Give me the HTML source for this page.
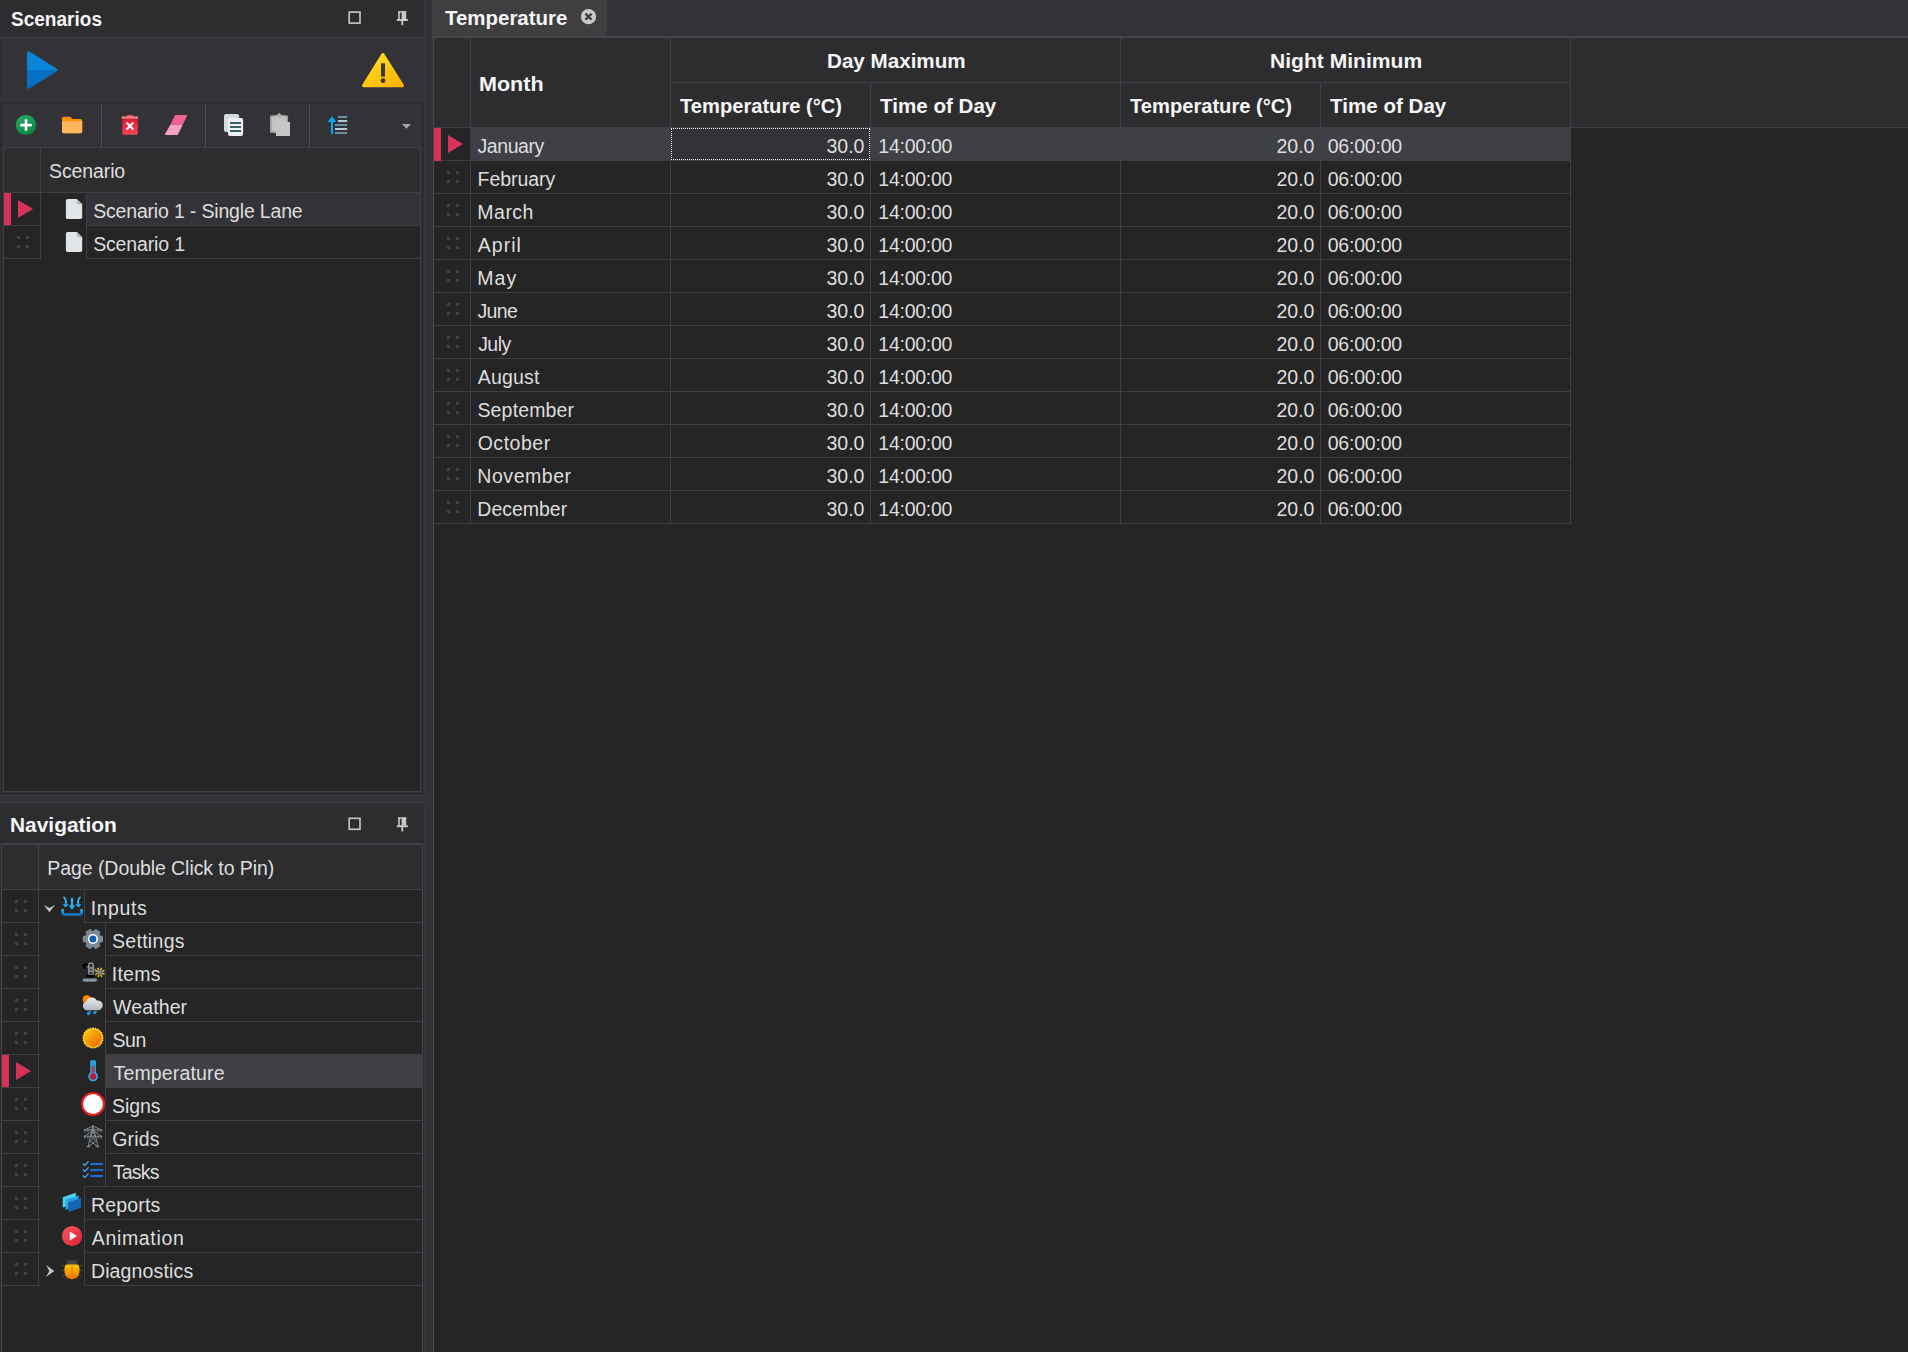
<!DOCTYPE html>
<html lang="en"><head><meta charset="utf-8"><title>Temperature</title>
<style>
html,body{margin:0;padding:0;background:#252526;}
body{width:1908px;height:1352px;overflow:hidden;position:relative;font-family:"Liberation Sans",sans-serif;font-size:19.5px;color:#f4f4f4;}
.t{position:absolute;white-space:nowrap;line-height:normal;color:#dedede;}
.b{font-weight:bold;color:#f6f6f6;transform-origin:0 0;}
.r{position:absolute;}
svg{position:absolute;overflow:visible;}
</style></head>
<body>
<div class="r" style="left:0px;top:0px;width:425px;height:796px;background:#2d2d30;"></div>
<div class="r" style="left:0px;top:37px;width:425px;height:1px;background:#3f3f46;"></div>
<div class="r" style="left:424px;top:0px;width:1px;height:796px;background:#38383c;"></div>
<div class="r" style="left:0px;top:795px;width:425px;height:1px;background:#3f3f46;"></div>
<div class="r" style="left:1px;top:38px;width:423px;height:64px;background:#333337;"></div>
<div class="r" style="left:3px;top:104px;width:418px;height:43px;background:#333337;"></div>
<div class="r" style="left:101px;top:104px;width:1px;height:43px;background:#4e4e53;"></div>
<div class="r" style="left:102px;top:104px;width:1px;height:43px;background:#2f2f33;"></div>
<div class="r" style="left:205px;top:104px;width:1px;height:43px;background:#4e4e53;"></div>
<div class="r" style="left:206px;top:104px;width:1px;height:43px;background:#2f2f33;"></div>
<div class="r" style="left:309px;top:104px;width:1px;height:43px;background:#4e4e53;"></div>
<div class="r" style="left:310px;top:104px;width:1px;height:43px;background:#2f2f33;"></div>
<div class="r" style="left:3px;top:147px;width:418px;height:645px;background:#3f3f46;"></div>
<div class="r" style="left:4px;top:148px;width:416px;height:643px;background:#252526;"></div>
<div class="r" style="left:4px;top:148px;width:416px;height:44px;background:#2d2d30;"></div>
<div class="r" style="left:4px;top:192px;width:416px;height:1px;background:#3f3f46;"></div>
<div class="r" style="left:40px;top:148px;width:1px;height:111px;background:#3f3f46;"></div>
<div class="r" style="left:4px;top:225px;width:38px;height:1px;background:#3f3f46;"></div>
<div class="r" style="left:4px;top:258px;width:38px;height:1px;background:#3f3f46;"></div>
<div class="r" style="left:86px;top:193px;width:1px;height:66px;background:#3f3f46;"></div>
<div class="r" style="left:87px;top:193px;width:333px;height:32px;background:#333337;"></div>
<div class="r" style="left:86px;top:225px;width:334px;height:1px;background:#3f3f46;"></div>
<div class="r" style="left:86px;top:258px;width:334px;height:1px;background:#3f3f46;"></div>
<div class="r" style="left:4px;top:193px;width:7px;height:32px;background:#d6325c;"></div>
<div class="r" style="left:17px;top:236px;width:3px;height:3px;background:#434346;"></div><div class="r" style="left:17px;top:245px;width:3px;height:3px;background:#434346;"></div><div class="r" style="left:26px;top:236px;width:3px;height:3px;background:#434346;"></div><div class="r" style="left:26px;top:245px;width:3px;height:3px;background:#434346;"></div>
<div class="r" style="left:0px;top:796px;width:425px;height:6px;background:#333337;"></div>
<div class="r" style="left:425px;top:0px;width:8px;height:1352px;background:#333337;"></div>
<div class="r" style="left:0px;top:802px;width:425px;height:550px;background:#2d2d30;"></div>
<div class="r" style="left:0px;top:802px;width:425px;height:1px;background:#3f3f46;"></div>
<div class="r" style="left:424px;top:802px;width:1px;height:550px;background:#38383c;"></div>
<div class="r" style="left:0px;top:843px;width:425px;height:1px;background:#3f3f46;"></div>
<div class="r" style="left:1px;top:844px;width:422px;height:508px;background:#434347;"></div>
<div class="r" style="left:2px;top:845px;width:420px;height:507px;background:#252526;"></div>
<div class="r" style="left:2px;top:845px;width:420px;height:44px;background:#2d2d30;"></div>
<div class="r" style="left:2px;top:889px;width:420px;height:1px;background:#3f3f46;"></div>
<div class="r" style="left:38px;top:845px;width:1px;height:441px;background:#3f3f46;"></div>
<div class="r" style="left:2px;top:922px;width:38px;height:1px;background:#3f3f46;"></div>
<div class="r" style="left:84px;top:890px;width:1px;height:33px;background:#3f3f46;"></div>
<div class="r" style="left:84px;top:922px;width:338px;height:1px;background:#3f3f46;"></div>
<div class="r" style="left:15px;top:900px;width:3px;height:3px;background:#434346;"></div><div class="r" style="left:15px;top:909px;width:3px;height:3px;background:#434346;"></div><div class="r" style="left:24px;top:900px;width:3px;height:3px;background:#434346;"></div><div class="r" style="left:24px;top:909px;width:3px;height:3px;background:#434346;"></div>
<div class="r" style="left:2px;top:955px;width:38px;height:1px;background:#3f3f46;"></div>
<div class="r" style="left:105px;top:923px;width:1px;height:33px;background:#3f3f46;"></div>
<div class="r" style="left:105px;top:955px;width:317px;height:1px;background:#3f3f46;"></div>
<div class="r" style="left:15px;top:933px;width:3px;height:3px;background:#434346;"></div><div class="r" style="left:15px;top:942px;width:3px;height:3px;background:#434346;"></div><div class="r" style="left:24px;top:933px;width:3px;height:3px;background:#434346;"></div><div class="r" style="left:24px;top:942px;width:3px;height:3px;background:#434346;"></div>
<div class="r" style="left:2px;top:988px;width:38px;height:1px;background:#3f3f46;"></div>
<div class="r" style="left:105px;top:956px;width:1px;height:33px;background:#3f3f46;"></div>
<div class="r" style="left:105px;top:988px;width:317px;height:1px;background:#3f3f46;"></div>
<div class="r" style="left:15px;top:966px;width:3px;height:3px;background:#434346;"></div><div class="r" style="left:15px;top:975px;width:3px;height:3px;background:#434346;"></div><div class="r" style="left:24px;top:966px;width:3px;height:3px;background:#434346;"></div><div class="r" style="left:24px;top:975px;width:3px;height:3px;background:#434346;"></div>
<div class="r" style="left:2px;top:1021px;width:38px;height:1px;background:#3f3f46;"></div>
<div class="r" style="left:105px;top:989px;width:1px;height:33px;background:#3f3f46;"></div>
<div class="r" style="left:105px;top:1021px;width:317px;height:1px;background:#3f3f46;"></div>
<div class="r" style="left:15px;top:999px;width:3px;height:3px;background:#434346;"></div><div class="r" style="left:15px;top:1008px;width:3px;height:3px;background:#434346;"></div><div class="r" style="left:24px;top:999px;width:3px;height:3px;background:#434346;"></div><div class="r" style="left:24px;top:1008px;width:3px;height:3px;background:#434346;"></div>
<div class="r" style="left:2px;top:1054px;width:38px;height:1px;background:#3f3f46;"></div>
<div class="r" style="left:105px;top:1022px;width:1px;height:33px;background:#3f3f46;"></div>
<div class="r" style="left:105px;top:1054px;width:317px;height:1px;background:#3f3f46;"></div>
<div class="r" style="left:15px;top:1032px;width:3px;height:3px;background:#434346;"></div><div class="r" style="left:15px;top:1041px;width:3px;height:3px;background:#434346;"></div><div class="r" style="left:24px;top:1032px;width:3px;height:3px;background:#434346;"></div><div class="r" style="left:24px;top:1041px;width:3px;height:3px;background:#434346;"></div>
<div class="r" style="left:2px;top:1087px;width:38px;height:1px;background:#3f3f46;"></div>
<div class="r" style="left:105px;top:1055px;width:1px;height:33px;background:#3f3f46;"></div>
<div class="r" style="left:105px;top:1087px;width:317px;height:1px;background:#3f3f46;"></div>
<div class="r" style="left:105px;top:1054px;width:317px;height:34px;background:#3f4046;"></div>
<div class="r" style="left:2px;top:1055px;width:7px;height:32px;background:#d6325c;"></div>
<div class="r" style="left:2px;top:1120px;width:38px;height:1px;background:#3f3f46;"></div>
<div class="r" style="left:105px;top:1088px;width:1px;height:33px;background:#3f3f46;"></div>
<div class="r" style="left:105px;top:1120px;width:317px;height:1px;background:#3f3f46;"></div>
<div class="r" style="left:15px;top:1098px;width:3px;height:3px;background:#434346;"></div><div class="r" style="left:15px;top:1107px;width:3px;height:3px;background:#434346;"></div><div class="r" style="left:24px;top:1098px;width:3px;height:3px;background:#434346;"></div><div class="r" style="left:24px;top:1107px;width:3px;height:3px;background:#434346;"></div>
<div class="r" style="left:2px;top:1153px;width:38px;height:1px;background:#3f3f46;"></div>
<div class="r" style="left:105px;top:1121px;width:1px;height:33px;background:#3f3f46;"></div>
<div class="r" style="left:105px;top:1153px;width:317px;height:1px;background:#3f3f46;"></div>
<div class="r" style="left:15px;top:1131px;width:3px;height:3px;background:#434346;"></div><div class="r" style="left:15px;top:1140px;width:3px;height:3px;background:#434346;"></div><div class="r" style="left:24px;top:1131px;width:3px;height:3px;background:#434346;"></div><div class="r" style="left:24px;top:1140px;width:3px;height:3px;background:#434346;"></div>
<div class="r" style="left:2px;top:1186px;width:38px;height:1px;background:#3f3f46;"></div>
<div class="r" style="left:105px;top:1154px;width:1px;height:33px;background:#3f3f46;"></div>
<div class="r" style="left:105px;top:1186px;width:317px;height:1px;background:#3f3f46;"></div>
<div class="r" style="left:15px;top:1164px;width:3px;height:3px;background:#434346;"></div><div class="r" style="left:15px;top:1173px;width:3px;height:3px;background:#434346;"></div><div class="r" style="left:24px;top:1164px;width:3px;height:3px;background:#434346;"></div><div class="r" style="left:24px;top:1173px;width:3px;height:3px;background:#434346;"></div>
<div class="r" style="left:2px;top:1219px;width:38px;height:1px;background:#3f3f46;"></div>
<div class="r" style="left:84px;top:1186px;width:1px;height:34px;background:#3f3f46;"></div>
<div class="r" style="left:84px;top:1219px;width:338px;height:1px;background:#3f3f46;"></div>
<div class="r" style="left:15px;top:1197px;width:3px;height:3px;background:#434346;"></div><div class="r" style="left:15px;top:1206px;width:3px;height:3px;background:#434346;"></div><div class="r" style="left:24px;top:1197px;width:3px;height:3px;background:#434346;"></div><div class="r" style="left:24px;top:1206px;width:3px;height:3px;background:#434346;"></div>
<div class="r" style="left:2px;top:1252px;width:38px;height:1px;background:#3f3f46;"></div>
<div class="r" style="left:84px;top:1220px;width:1px;height:33px;background:#3f3f46;"></div>
<div class="r" style="left:84px;top:1252px;width:338px;height:1px;background:#3f3f46;"></div>
<div class="r" style="left:15px;top:1230px;width:3px;height:3px;background:#434346;"></div><div class="r" style="left:15px;top:1239px;width:3px;height:3px;background:#434346;"></div><div class="r" style="left:24px;top:1230px;width:3px;height:3px;background:#434346;"></div><div class="r" style="left:24px;top:1239px;width:3px;height:3px;background:#434346;"></div>
<div class="r" style="left:2px;top:1285px;width:38px;height:1px;background:#3f3f46;"></div>
<div class="r" style="left:84px;top:1253px;width:1px;height:33px;background:#3f3f46;"></div>
<div class="r" style="left:84px;top:1285px;width:338px;height:1px;background:#3f3f46;"></div>
<div class="r" style="left:15px;top:1263px;width:3px;height:3px;background:#434346;"></div><div class="r" style="left:15px;top:1272px;width:3px;height:3px;background:#434346;"></div><div class="r" style="left:24px;top:1263px;width:3px;height:3px;background:#434346;"></div><div class="r" style="left:24px;top:1272px;width:3px;height:3px;background:#434346;"></div>
<div class="r" style="left:84px;top:1186px;width:22px;height:1px;background:#3f3f46;"></div>
<div class="r" style="left:433px;top:0px;width:1475px;height:36px;background:#333337;"></div>
<div class="r" style="left:432px;top:0px;width:175px;height:36px;background:#3f3f42;"></div>
<div class="r" style="left:432px;top:36px;width:1476px;height:2px;background:#45454a;"></div>
<div class="r" style="left:433px;top:38px;width:1px;height:1314px;background:#46464b;"></div>
<div class="r" style="left:434px;top:38px;width:1474px;height:89px;background:#2d2d30;"></div>
<div class="r" style="left:434px;top:127px;width:1474px;height:1px;background:#3f3f46;"></div>
<div class="r" style="left:671px;top:82px;width:900px;height:1px;background:#3f3f46;"></div>
<div class="r" style="left:470px;top:38px;width:1px;height:486px;background:#3f3f46;"></div>
<div class="r" style="left:670px;top:38px;width:1px;height:486px;background:#3f3f46;"></div>
<div class="r" style="left:870px;top:83px;width:1px;height:441px;background:#3f3f46;"></div>
<div class="r" style="left:1120px;top:38px;width:1px;height:486px;background:#3f3f46;"></div>
<div class="r" style="left:1320px;top:83px;width:1px;height:441px;background:#3f3f46;"></div>
<div class="r" style="left:1570px;top:38px;width:1px;height:486px;background:#3f3f46;"></div>
<div class="r" style="left:434px;top:160px;width:1137px;height:1px;background:#3f3f46;"></div>
<div class="r" style="left:434px;top:193px;width:1137px;height:1px;background:#3f3f46;"></div>
<div class="r" style="left:447px;top:171px;width:3px;height:3px;background:#434346;"></div><div class="r" style="left:447px;top:180px;width:3px;height:3px;background:#434346;"></div><div class="r" style="left:456px;top:171px;width:3px;height:3px;background:#434346;"></div><div class="r" style="left:456px;top:180px;width:3px;height:3px;background:#434346;"></div>
<div class="r" style="left:434px;top:226px;width:1137px;height:1px;background:#3f3f46;"></div>
<div class="r" style="left:447px;top:204px;width:3px;height:3px;background:#434346;"></div><div class="r" style="left:447px;top:213px;width:3px;height:3px;background:#434346;"></div><div class="r" style="left:456px;top:204px;width:3px;height:3px;background:#434346;"></div><div class="r" style="left:456px;top:213px;width:3px;height:3px;background:#434346;"></div>
<div class="r" style="left:434px;top:259px;width:1137px;height:1px;background:#3f3f46;"></div>
<div class="r" style="left:447px;top:237px;width:3px;height:3px;background:#434346;"></div><div class="r" style="left:447px;top:246px;width:3px;height:3px;background:#434346;"></div><div class="r" style="left:456px;top:237px;width:3px;height:3px;background:#434346;"></div><div class="r" style="left:456px;top:246px;width:3px;height:3px;background:#434346;"></div>
<div class="r" style="left:434px;top:292px;width:1137px;height:1px;background:#3f3f46;"></div>
<div class="r" style="left:447px;top:270px;width:3px;height:3px;background:#434346;"></div><div class="r" style="left:447px;top:279px;width:3px;height:3px;background:#434346;"></div><div class="r" style="left:456px;top:270px;width:3px;height:3px;background:#434346;"></div><div class="r" style="left:456px;top:279px;width:3px;height:3px;background:#434346;"></div>
<div class="r" style="left:434px;top:325px;width:1137px;height:1px;background:#3f3f46;"></div>
<div class="r" style="left:447px;top:303px;width:3px;height:3px;background:#434346;"></div><div class="r" style="left:447px;top:312px;width:3px;height:3px;background:#434346;"></div><div class="r" style="left:456px;top:303px;width:3px;height:3px;background:#434346;"></div><div class="r" style="left:456px;top:312px;width:3px;height:3px;background:#434346;"></div>
<div class="r" style="left:434px;top:358px;width:1137px;height:1px;background:#3f3f46;"></div>
<div class="r" style="left:447px;top:336px;width:3px;height:3px;background:#434346;"></div><div class="r" style="left:447px;top:345px;width:3px;height:3px;background:#434346;"></div><div class="r" style="left:456px;top:336px;width:3px;height:3px;background:#434346;"></div><div class="r" style="left:456px;top:345px;width:3px;height:3px;background:#434346;"></div>
<div class="r" style="left:434px;top:391px;width:1137px;height:1px;background:#3f3f46;"></div>
<div class="r" style="left:447px;top:369px;width:3px;height:3px;background:#434346;"></div><div class="r" style="left:447px;top:378px;width:3px;height:3px;background:#434346;"></div><div class="r" style="left:456px;top:369px;width:3px;height:3px;background:#434346;"></div><div class="r" style="left:456px;top:378px;width:3px;height:3px;background:#434346;"></div>
<div class="r" style="left:434px;top:424px;width:1137px;height:1px;background:#3f3f46;"></div>
<div class="r" style="left:447px;top:402px;width:3px;height:3px;background:#434346;"></div><div class="r" style="left:447px;top:411px;width:3px;height:3px;background:#434346;"></div><div class="r" style="left:456px;top:402px;width:3px;height:3px;background:#434346;"></div><div class="r" style="left:456px;top:411px;width:3px;height:3px;background:#434346;"></div>
<div class="r" style="left:434px;top:457px;width:1137px;height:1px;background:#3f3f46;"></div>
<div class="r" style="left:447px;top:435px;width:3px;height:3px;background:#434346;"></div><div class="r" style="left:447px;top:444px;width:3px;height:3px;background:#434346;"></div><div class="r" style="left:456px;top:435px;width:3px;height:3px;background:#434346;"></div><div class="r" style="left:456px;top:444px;width:3px;height:3px;background:#434346;"></div>
<div class="r" style="left:434px;top:490px;width:1137px;height:1px;background:#3f3f46;"></div>
<div class="r" style="left:447px;top:468px;width:3px;height:3px;background:#434346;"></div><div class="r" style="left:447px;top:477px;width:3px;height:3px;background:#434346;"></div><div class="r" style="left:456px;top:468px;width:3px;height:3px;background:#434346;"></div><div class="r" style="left:456px;top:477px;width:3px;height:3px;background:#434346;"></div>
<div class="r" style="left:434px;top:523px;width:1137px;height:1px;background:#3f3f46;"></div>
<div class="r" style="left:447px;top:501px;width:3px;height:3px;background:#434346;"></div><div class="r" style="left:447px;top:510px;width:3px;height:3px;background:#434346;"></div><div class="r" style="left:456px;top:501px;width:3px;height:3px;background:#434346;"></div><div class="r" style="left:456px;top:510px;width:3px;height:3px;background:#434346;"></div>
<div class="r" style="left:471px;top:127px;width:1100px;height:34px;background:#3f4046;"></div>
<div class="r" style="left:434px;top:128px;width:7px;height:33px;background:#d6325c;"></div>
<div class="r" style="left:671px;top:128px;width:197px;height:30px;background:#333337;border:1px dotted #f0f0f0"></div>
<svg width="1908" height="1352" style="left:0;top:0" viewBox="0 0 1908 1352"><polygon points="18,200 33,209 18,218" fill="#d6325c"/><polygon points="16,1062 31,1071 16,1080" fill="#d6325c"/><polygon points="448,135 463,144 448,153" fill="#d6325c"/><defs>
<linearGradient id="gPlay" gradientUnits="userSpaceOnUse" x1="0" y1="51" x2="0" y2="89"><stop offset="0.5" stop-color="#0a84d9"/><stop offset="0.5" stop-color="#066fc4"/></linearGradient>
<linearGradient id="gWarn" x1="0.2" y1="0.1" x2="0.9" y2="1"><stop offset="0" stop-color="#ffde21"/><stop offset="1" stop-color="#ffb200"/></linearGradient>
<linearGradient id="gGreen" x1="0.2" y1="0" x2="0.8" y2="1"><stop offset="0" stop-color="#21ad64"/><stop offset="1" stop-color="#088242"/></linearGradient>
<linearGradient id="gTrash" x1="0" y1="0" x2="0" y2="1"><stop offset="0" stop-color="#e5182d"/><stop offset="1" stop-color="#f3475a"/></linearGradient>
<linearGradient id="gSun" x1="0.15" y1="0.1" x2="0.85" y2="0.9"><stop offset="0" stop-color="#fec20e"/><stop offset="1" stop-color="#ec6a00"/></linearGradient>
<linearGradient id="gCloud" x1="0" y1="0" x2="0" y2="1"><stop offset="0" stop-color="#eceef0"/><stop offset="1" stop-color="#b4b8bc"/></linearGradient>
<linearGradient id="gAnim" x1="0.1" y1="0.1" x2="0.9" y2="0.9"><stop offset="0" stop-color="#f2505f"/><stop offset="1" stop-color="#e2243a"/></linearGradient>
<linearGradient id="gBug" x1="0" y1="0" x2="0" y2="1"><stop offset="0" stop-color="#ffc400"/><stop offset="1" stop-color="#ef7200"/></linearGradient>
<linearGradient id="gTherm" gradientUnits="userSpaceOnUse" x1="0" y1="1061" x2="0" y2="1074"><stop offset="0.25" stop-color="#1e9fe8"/><stop offset="0.75" stop-color="#a04a6a"/><stop offset="1" stop-color="#c02036"/></linearGradient>
<linearGradient id="gTray" gradientUnits="userSpaceOnUse" x1="0" y1="909" x2="0" y2="916"><stop offset="0" stop-color="#2ab4f4"/><stop offset="0.55" stop-color="#1e9be8"/><stop offset="0.62" stop-color="#0b78d0"/><stop offset="1" stop-color="#0b78d0"/></linearGradient>
</defs><polygon points="28.5,52.8 56.2,70 28.5,87.2" fill="url(#gPlay)" stroke="url(#gPlay)" stroke-width="3" stroke-linejoin="round"/><polygon points="382.9,54.6 402.4,85.6 363.6,85.6" fill="url(#gWarn)" stroke="url(#gWarn)" stroke-width="3.2" stroke-linejoin="round"/><rect x="381" y="63.3" width="4" height="13.4" fill="#3b3b40"/><circle cx="383" cy="80.7" r="2.4" fill="#35353a"/><rect x="349.2" y="12.1" width="10.8" height="11" fill="none" stroke="#c8c8c8" stroke-width="1.6"/><g fill="#c8c8c8"><rect x="398.2" y="11.2" width="8" height="1.4"/><rect x="398.2" y="11.2" width="1.6" height="8"/><rect x="401.6" y="11.2" width="4.6" height="8"/><rect x="396.8" y="19" width="11" height="2"/><rect x="401.4" y="20.8" width="1.8" height="4.4"/></g><rect x="349.2" y="818.3" width="10.8" height="11" fill="none" stroke="#c8c8c8" stroke-width="1.6"/><g fill="#c8c8c8"><rect x="398.2" y="817.4" width="8" height="1.4"/><rect x="398.2" y="817.4" width="1.6" height="8"/><rect x="401.6" y="817.4" width="4.6" height="8"/><rect x="396.8" y="825.2" width="11" height="2"/><rect x="401.4" y="827" width="1.8" height="4.4"/></g><circle cx="26" cy="125" r="10.1" fill="url(#gGreen)"/><rect x="20.3" y="123.7" width="11.6" height="2.7" rx="0.5" fill="#fff"/><rect x="24.7" y="119.2" width="2.7" height="11.6" rx="0.5" fill="#fff"/><path d="M62,118.4 q0,-1.7 1.7,-1.7 h6.6 l2.3,2.3 h7.9 q1.7,0 1.7,1.7 v11 q0,1.6 -1.7,1.6 h-16.8 q-1.7,0 -1.7,-1.6 z" fill="#ff9100"/><path d="M62,121 h20.2 v10.7 q0,1.6 -1.7,1.6 h-16.8 q-1.7,0 -1.7,-1.6 z" fill="#fcb55c"/><rect x="127" y="114.9" width="6.2" height="2.2" rx="0.8" fill="#f4505f"/><rect x="121.8" y="116.4" width="16.3" height="2.3" rx="0.4" fill="#ff8d8d"/><path d="M122.4,118.7 h15.4 v14.6 q0,1.4 -1.4,1.4 h-12.6 q-1.4,0 -1.4,-1.4 z" fill="url(#gTrash)"/><path d="M126.6,122.6 l6.8,6.8 M133.4,122.6 l-6.8,6.8" stroke="#fff" stroke-width="2.1" fill="none"/><path d="M175.6,114.9 h10.6 q1.4,0 0.8,1.2 l-4.3,8.6 h-12.4 l4.4,-8.9 q0.4,-0.9 0.9,-0.9 z" fill="#f06292"/><path d="M170.3,124.7 h12.4 l-4.6,9.6 q-0.4,0.8 -1.2,0.8 h-11.2 q-1.2,0 -0.6,-1.2 z" fill="#f6a1c0"/><rect x="224" y="113.9" width="15.1" height="18.2" rx="2" fill="#d3dbe1"/><rect x="228" y="117.9" width="15.1" height="18.2" rx="2" fill="#eef1f3"/><rect x="230" y="122" width="11" height="2" fill="#3f5f6e"/><rect x="230" y="126" width="11" height="2" fill="#3f5f6e"/><rect x="230" y="130" width="11" height="2" fill="#3f5f6e"/><rect x="270" y="115.2" width="18.1" height="17.8" rx="1.6" fill="#9f9f9f"/><rect x="271.6" y="116.8" width="14.9" height="14.6" fill="#c3c3c3"/><path d="M274.5,117.2 v-1.6 h2.6 q0.3,-2.6 2,-2.6 t2,2.6 h2.6 v1.6 z" fill="#b4b4b4"/><circle cx="279.1" cy="115.9" r="0.9" fill="#a0a0a0"/><rect x="275.9" y="122" width="14.1" height="14" fill="#c6c6c6"/><polygon points="332,116 336.2,122 327.8,122" fill="#08a5f4"/><rect x="330.9" y="121" width="2.2" height="13" fill="#08a5f4"/><rect x="338" y="116" width="9.2" height="2" fill="#6b8fa3"/><rect x="338" y="120" width="9.2" height="2" fill="#b4c8d0"/><rect x="335" y="124" width="12.2" height="2" fill="#6b8fa3"/><rect x="335" y="128" width="12.2" height="2" fill="#b4c8d0"/><rect x="335" y="132" width="12.2" height="2" fill="#6b8fa3"/><polygon points="401.9,124 411,124 406.45,128.7" fill="#a6a6a6"/><path d="M67.6,198.9 h9.2 l5.4,5.4 v13 q0,1.7 -1.7,1.7 h-12.9 q-1.7,0 -1.7,-1.7 v-16.7 q0,-1.7 1.7,-1.7 z" fill="#e1e5e8"/><path d="M76.8,198.9 l5.4,5.4 h-4 q-1.4,0 -1.4,-1.4 z" fill="#aebbc4"/><path d="M67.6,231.9 h9.2 l5.4,5.4 v13 q0,1.7 -1.7,1.7 h-12.9 q-1.7,0 -1.7,-1.7 v-16.7 q0,-1.7 1.7,-1.7 z" fill="#e1e5e8"/><path d="M76.8,231.9 l5.4,5.4 h-4 q-1.4,0 -1.4,-1.4 z" fill="#aebbc4"/><circle cx="588.5" cy="16.7" r="7.6" fill="#c9c9c9"/><path d="M585.4,13.6 l6.2,6.2 M591.6,13.6 l-6.2,6.2" stroke="#3c3c40" stroke-width="2.2" fill="none"/><polygon points="43.6,904.8 49.4,907.9 55.3,904.8 49.4,912.3" fill="#c6c6c6"/><polygon points="46,1265 54.3,1271 46,1277 49.4,1271" fill="#c6c6c6"/><path d="M62.6,909 v3.2 q0,2.3 2.3,2.3 h14.4 q2.3,0 2.3,-2.3 v-3.2" fill="none" stroke="url(#gTray)" stroke-width="2.5" stroke-linecap="butt"/><g fill="#29b3f5" stroke="none"><rect x="70.9" y="897.8" width="2.2" height="9"/><polygon points="68.6,905.6 75.4,905.6 72,909.8"/><polygon points="62.6,904.2 68.6,904.2 65.6,907.6"/><polygon points="75.4,904.2 81.4,904.2 78.4,907.6"/></g><path d="M63.4,897 q3.4,2.2 2.3,7.4" fill="none" stroke="#29b3f5" stroke-width="2"/><path d="M80.6,897 q-3.4,2.2 -2.3,7.4" fill="none" stroke="#29b3f5" stroke-width="2"/><g transform="translate(92.9,939)"><circle r="8.3" fill="#7d8995"/><rect x="6" y="-3.2" width="4.1" height="6.4" rx="1.3" fill="#7d8995" transform="rotate(0)"/><rect x="6" y="-3.2" width="4.1" height="6.4" rx="1.3" fill="#7d8995" transform="rotate(60)"/><rect x="6" y="-3.2" width="4.1" height="6.4" rx="1.3" fill="#7d8995" transform="rotate(120)"/><rect x="6" y="-3.2" width="4.1" height="6.4" rx="1.3" fill="#7d8995" transform="rotate(180)"/><rect x="6" y="-3.2" width="4.1" height="6.4" rx="1.3" fill="#7d8995" transform="rotate(240)"/><rect x="6" y="-3.2" width="4.1" height="6.4" rx="1.3" fill="#7d8995" transform="rotate(300)"/><circle r="5.1" fill="#fff"/><circle r="3.5" fill="#1660b4"/></g><polygon points="82.4,965.4 86.4,963 88.2,966.6 84.4,969" fill="#050505" stroke="#050505" stroke-width="0.8" stroke-linejoin="round"/><path d="M86,966.6 l2.5,0.8" stroke="#8f979e" stroke-width="1"/><rect x="88.8" y="963.2" width="4.4" height="11.6" rx="1.6" fill="none" stroke="#a3a9af" stroke-width="1.2"/><path d="M89,966.5 l4,3 l-4,3 M93,966.5 l-4,3 l4,3" stroke="#a3a9af" stroke-width="0.8" fill="none"/><rect x="86" y="974.8" width="8.6" height="2.4" rx="1" fill="#050505"/><rect x="82.6" y="978.4" width="14.6" height="3.4" rx="1.7" fill="#7e8b96"/><rect x="84.4" y="979.4" width="1.2" height="1.4" fill="#a9b3bb"/><rect x="86.9" y="979.4" width="1.2" height="1.4" fill="#a9b3bb"/><rect x="89.4" y="979.4" width="1.2" height="1.4" fill="#a9b3bb"/><rect x="91.9" y="979.4" width="1.2" height="1.4" fill="#a9b3bb"/><rect x="94.4" y="979.4" width="1.2" height="1.4" fill="#a9b3bb"/><path d="M93.4,968.6 l5.4,3" stroke="#8f979e" stroke-width="1"/><g transform="translate(99.8,972.4)"><rect x="2.4" y="-0.7" width="2.6" height="1.4" fill="#f4c430" transform="rotate(20)"/><rect x="2.4" y="-0.7" width="2.6" height="1.4" fill="#f4c430" transform="rotate(65)"/><rect x="2.4" y="-0.7" width="2.6" height="1.4" fill="#f4c430" transform="rotate(110)"/><rect x="2.4" y="-0.7" width="2.6" height="1.4" fill="#f4c430" transform="rotate(155)"/><rect x="2.4" y="-0.7" width="2.6" height="1.4" fill="#f4c430" transform="rotate(200)"/><rect x="2.4" y="-0.7" width="2.6" height="1.4" fill="#f4c430" transform="rotate(245)"/><rect x="2.4" y="-0.7" width="2.6" height="1.4" fill="#f4c430" transform="rotate(290)"/><rect x="2.4" y="-0.7" width="2.6" height="1.4" fill="#f4c430" transform="rotate(335)"/><circle r="2.2" fill="#7e8b96"/></g><circle cx="87" cy="999.6" r="4.4" fill="#f57c00"/><circle cx="86.2" cy="998.6" r="3" fill="#fb8c00"/><path d="M87,1010.2 a4.3,4.3 0 0 1 -0.6,-8.5 a5.6,5.6 0 0 1 10.4,-1.2 a4.9,4.9 0 0 1 2,9.7 z" fill="url(#gCloud)"/><path d="M91,1010.8 q-0.6,4.6 -2.9,4.2 q-2.2,-0.8 -0.6,-2.9 z" fill="#1e9be8"/><path d="M97,1010.6 q-0.6,4 -2.7,3.6 q-1.9,-0.8 -0.5,-2.6 z" fill="#1e9be8"/><polygon points="103.90,1038.00 102.62,1039.27 103.53,1040.82 101.96,1041.71 102.44,1043.45 100.70,1043.90 100.71,1045.71 98.90,1045.70 98.45,1047.44 96.71,1046.96 95.82,1048.53 94.27,1047.62 93.00,1048.90 91.73,1047.62 90.18,1048.53 89.29,1046.96 87.55,1047.44 87.10,1045.70 85.29,1045.71 85.30,1043.90 83.56,1043.45 84.04,1041.71 82.47,1040.82 83.38,1039.27 82.10,1038.00 83.38,1036.73 82.47,1035.18 84.04,1034.29 83.56,1032.55 85.30,1032.10 85.29,1030.29 87.10,1030.30 87.55,1028.56 89.29,1029.04 90.18,1027.47 91.73,1028.38 93.00,1027.10 94.27,1028.38 95.82,1027.47 96.71,1029.04 98.45,1028.56 98.90,1030.30 100.71,1030.29 100.70,1032.10 102.44,1032.55 101.96,1034.29 103.53,1035.18 102.62,1036.73" fill="#fdd02a"/><circle cx="93" cy="1038" r="8.9" fill="url(#gSun)"/><rect x="90.9" y="1060.9" width="4.4" height="14" rx="0.6" fill="url(#gTherm)" stroke="#27b1f0" stroke-width="1.1"/><circle cx="93.1" cy="1076.5" r="4" fill="#b41d30" stroke="#27b1f0" stroke-width="1.7"/><rect x="91.9" y="1066" width="2.4" height="8" fill="#a83e5a" opacity="0.9"/><circle cx="93" cy="1104" r="11" fill="#fff" stroke="#fa1414" stroke-width="2"/><g stroke="#8d969e" stroke-width="0.9" fill="none" stroke-linecap="round"><path d="M93,1126 L88,1146.6 M93,1126 L98,1146.6"/><path d="M84,1129.8 H102 M84,1136.2 H102"/><path d="M93,1126 L85,1129.8 M93,1126 L101,1129.8"/><path d="M91.8,1131 L85,1136.2 M94.2,1131 L101,1136.2"/><path d="M91.9,1130 L95.4,1136 L90.2,1141 L97.6,1146.4 M94.1,1130 L90.6,1136 L95.8,1141 L88.4,1146.4"/><path d="M85,1130 v1.8 M88,1130 v1.8 M98,1130 v1.8 M101,1130 v1.8 M85,1136.4 v1.8 M88,1136.4 v1.8 M98,1136.4 v1.8 M101,1136.4 v1.8"/><path d="M87,1146.8 h3 M96,1146.8 h3"/></g><rect x="90.3" y="1163" width="12.8" height="2.1" fill="#1a6fd6"/><path d="M83,1163.5 l1.9,1.9 l3.6,-4" stroke="#3fa4f4" stroke-width="1.4" fill="none"/><rect x="90.3" y="1169" width="12.8" height="2.1" fill="#1a6fd6"/><path d="M83,1169.5 l1.9,1.9 l3.6,-4" stroke="#3fa4f4" stroke-width="1.4" fill="none"/><rect x="90.3" y="1175" width="12.8" height="2.1" fill="#1a6fd6"/><path d="M83,1175.5 l1.9,1.9 l3.6,-4" stroke="#3fa4f4" stroke-width="1.4" fill="none"/><polygon points="62.8,1197.2 75.8,1192.8 75.8,1203.2 62.8,1207.4" fill="#4fd4f7"/><polygon points="65.5,1199.6 78.6,1195.4 78.6,1205.6 65.5,1209.8" fill="#27a6e6"/><polygon points="68.2,1202.2 81,1198 81,1207.8 68.2,1212" fill="#1466b2"/><circle cx="72.1" cy="1236" r="10.1" fill="url(#gAnim)"/><polygon points="70.1,1232.1 76.3,1236 70.1,1239.9" fill="#fff" stroke="#fff" stroke-width="0.7" stroke-linejoin="round"/><g stroke="#4a4e53" stroke-width="1" stroke-linecap="round"><path d="M66.2,1259.4 l2.4,2.6 M77.8,1259.4 l-2.4,2.6 M62.4,1265 l2.4,1.2 M81.6,1265 l-2.4,1.2 M61.4,1270.6 h3 M82.6,1270.6 h-3 M63,1276.4 l2.4,-1.4 M81,1276.4 l-2.4,-1.4"/></g><path d="M66.3,1265 a5.7,5 0 0 1 11.4,0 z" fill="#43474c"/><path d="M64.4,1270 q0,-5 2.4,-5.6 h10.4 q2.4,0.6 2.4,5.6 q0,9.2 -7.6,9.2 t-7.6,-9.2 z" fill="url(#gBug)"/><path d="M72,1265 v14" stroke="#e07800" stroke-width="0.9" opacity="0.8"/></svg>
<div class="t b" id="t_scen" style="left:11.00px;top:8.35px;transform:scaleX(0.9761)">Scenarios</div>
<div class="t b" id="t_nav" style="left:10.00px;top:814.05px;transform:scaleX(1.0717)">Navigation</div>
<div class="t" id="h_scen" style="left:49.12px;top:160.15px;letter-spacing:-0.128px">Scenario</div>
<div class="t" id="r_scen1" style="left:93.15px;top:200.15px;letter-spacing:-0.176px">Scenario 1 - Single Lane</div>
<div class="t" id="r_scen2" style="left:93.15px;top:233.15px;letter-spacing:-0.147px">Scenario 1</div>
<div class="t" id="h_page" style="left:47.33px;top:857.35px;letter-spacing:-0.068px">Page (Double Click to Pin)</div>
<div class="t" id="nav0" style="left:90.65px;top:897.35px;letter-spacing:0.576px">Inputs</div>
<div class="t" id="nav1" style="left:111.97px;top:930.35px;letter-spacing:0.301px">Settings</div>
<div class="t" id="nav2" style="left:111.83px;top:963.35px;letter-spacing:0.225px">Items</div>
<div class="t" id="nav3" style="left:113.08px;top:996.35px;letter-spacing:0.112px">Weather</div>
<div class="t" id="nav4" style="left:112.46px;top:1029.35px;letter-spacing:-0.344px">Sun</div>
<div class="t" id="nav5" style="left:113.59px;top:1062.35px;letter-spacing:0.149px">Temperature</div>
<div class="t" id="nav6" style="left:111.97px;top:1095.35px;letter-spacing:-0.088px">Signs</div>
<div class="t" id="nav7" style="left:112.20px;top:1128.35px;letter-spacing:0.156px">Grids</div>
<div class="t" id="nav8" style="left:112.87px;top:1161.35px;letter-spacing:-0.826px">Tasks</div>
<div class="t" id="nav9" style="left:90.93px;top:1194.35px;letter-spacing:0.194px">Reports</div>
<div class="t" id="nav10" style="left:91.85px;top:1227.35px;letter-spacing:0.651px">Animation</div>
<div class="t" id="nav11" style="left:90.93px;top:1260.35px;letter-spacing:0.144px">Diagnostics</div>
<div class="t b" id="tab" style="left:445.00px;top:7.05px;transform:scaleX(1.0487)">Temperature</div>
<div class="t b" id="h_month" style="left:479.00px;top:73.35px;transform:scaleX(1.1045)">Month</div>
<div class="t b" id="h_daymax" style="left:827.00px;top:49.65px;transform:scaleX(1.0569)">Day Maximum</div>
<div class="t b" id="h_nightmin" style="left:1270.00px;top:49.65px;transform:scaleX(1.0802)">Night Minimum</div>
<div class="t b" id="h_temp1" style="left:680.00px;top:95.35px;transform:scaleX(1.0321)">Temperature (°C)</div>
<div class="t b" id="h_tod1" style="left:880.00px;top:95.35px;transform:scaleX(1.0554)">Time of Day</div>
<div class="t b" id="h_temp2" style="left:1130.00px;top:95.35px;transform:scaleX(1.0321)">Temperature (°C)</div>
<div class="t b" id="h_tod2" style="left:1330.00px;top:95.35px;transform:scaleX(1.0554)">Time of Day</div>
<div class="t" id="m0" style="left:477.43px;top:135.15px;letter-spacing:-0.410px">January</div>
<div class="t" id="a0" style="left:826.52px;top:135.15px;letter-spacing:-0.003px">30.0</div>
<div class="t" id="b0" style="left:878.37px;top:135.15px;letter-spacing:-0.264px">14:00:00</div>
<div class="t" id="c0" style="left:1276.50px;top:135.15px;letter-spacing:-0.008px">20.0</div>
<div class="t" id="d0" style="left:1327.73px;top:135.15px;letter-spacing:-0.214px">06:00:00</div>
<div class="t" id="m1" style="left:477.58px;top:168.15px;letter-spacing:-0.062px">February</div>
<div class="t" id="a1" style="left:826.52px;top:168.15px;letter-spacing:-0.003px">30.0</div>
<div class="t" id="b1" style="left:878.37px;top:168.15px;letter-spacing:-0.264px">14:00:00</div>
<div class="t" id="c1" style="left:1276.50px;top:168.15px;letter-spacing:-0.008px">20.0</div>
<div class="t" id="d1" style="left:1327.73px;top:168.15px;letter-spacing:-0.214px">06:00:00</div>
<div class="t" id="m2" style="left:477.36px;top:201.15px;letter-spacing:0.477px">March</div>
<div class="t" id="a2" style="left:826.52px;top:201.15px;letter-spacing:-0.003px">30.0</div>
<div class="t" id="b2" style="left:878.37px;top:201.15px;letter-spacing:-0.264px">14:00:00</div>
<div class="t" id="c2" style="left:1276.50px;top:201.15px;letter-spacing:-0.008px">20.0</div>
<div class="t" id="d2" style="left:1327.73px;top:201.15px;letter-spacing:-0.214px">06:00:00</div>
<div class="t" id="m3" style="left:477.85px;top:234.15px;letter-spacing:0.986px">April</div>
<div class="t" id="a3" style="left:826.52px;top:234.15px;letter-spacing:-0.003px">30.0</div>
<div class="t" id="b3" style="left:878.37px;top:234.15px;letter-spacing:-0.264px">14:00:00</div>
<div class="t" id="c3" style="left:1276.50px;top:234.15px;letter-spacing:-0.008px">20.0</div>
<div class="t" id="d3" style="left:1327.73px;top:234.15px;letter-spacing:-0.214px">06:00:00</div>
<div class="t" id="m4" style="left:477.36px;top:267.15px;letter-spacing:0.999px">May</div>
<div class="t" id="a4" style="left:826.52px;top:267.15px;letter-spacing:-0.003px">30.0</div>
<div class="t" id="b4" style="left:878.37px;top:267.15px;letter-spacing:-0.264px">14:00:00</div>
<div class="t" id="c4" style="left:1276.50px;top:267.15px;letter-spacing:-0.008px">20.0</div>
<div class="t" id="d4" style="left:1327.73px;top:267.15px;letter-spacing:-0.214px">06:00:00</div>
<div class="t" id="m5" style="left:477.43px;top:300.15px;letter-spacing:-0.653px">June</div>
<div class="t" id="a5" style="left:826.52px;top:300.15px;letter-spacing:-0.003px">30.0</div>
<div class="t" id="b5" style="left:878.37px;top:300.15px;letter-spacing:-0.264px">14:00:00</div>
<div class="t" id="c5" style="left:1276.50px;top:300.15px;letter-spacing:-0.008px">20.0</div>
<div class="t" id="d5" style="left:1327.73px;top:300.15px;letter-spacing:-0.214px">06:00:00</div>
<div class="t" id="m6" style="left:478.13px;top:333.15px;letter-spacing:-0.529px">July</div>
<div class="t" id="a6" style="left:826.52px;top:333.15px;letter-spacing:-0.003px">30.0</div>
<div class="t" id="b6" style="left:878.37px;top:333.15px;letter-spacing:-0.264px">14:00:00</div>
<div class="t" id="c6" style="left:1276.50px;top:333.15px;letter-spacing:-0.008px">20.0</div>
<div class="t" id="d6" style="left:1327.73px;top:333.15px;letter-spacing:-0.214px">06:00:00</div>
<div class="t" id="m7" style="left:477.85px;top:366.15px;letter-spacing:0.171px">August</div>
<div class="t" id="a7" style="left:826.52px;top:366.15px;letter-spacing:-0.003px">30.0</div>
<div class="t" id="b7" style="left:878.37px;top:366.15px;letter-spacing:-0.264px">14:00:00</div>
<div class="t" id="c7" style="left:1276.50px;top:366.15px;letter-spacing:-0.008px">20.0</div>
<div class="t" id="d7" style="left:1327.73px;top:366.15px;letter-spacing:-0.214px">06:00:00</div>
<div class="t" id="m8" style="left:477.46px;top:399.15px;letter-spacing:0.159px">September</div>
<div class="t" id="a8" style="left:826.52px;top:399.15px;letter-spacing:-0.003px">30.0</div>
<div class="t" id="b8" style="left:878.37px;top:399.15px;letter-spacing:-0.264px">14:00:00</div>
<div class="t" id="c8" style="left:1276.50px;top:399.15px;letter-spacing:-0.008px">20.0</div>
<div class="t" id="d8" style="left:1327.73px;top:399.15px;letter-spacing:-0.214px">06:00:00</div>
<div class="t" id="m9" style="left:477.69px;top:432.15px;letter-spacing:0.517px">October</div>
<div class="t" id="a9" style="left:826.52px;top:432.15px;letter-spacing:-0.003px">30.0</div>
<div class="t" id="b9" style="left:878.37px;top:432.15px;letter-spacing:-0.264px">14:00:00</div>
<div class="t" id="c9" style="left:1276.50px;top:432.15px;letter-spacing:-0.008px">20.0</div>
<div class="t" id="d9" style="left:1327.73px;top:432.15px;letter-spacing:-0.214px">06:00:00</div>
<div class="t" id="m10" style="left:477.36px;top:465.15px;letter-spacing:0.541px">November</div>
<div class="t" id="a10" style="left:826.52px;top:465.15px;letter-spacing:-0.003px">30.0</div>
<div class="t" id="b10" style="left:878.37px;top:465.15px;letter-spacing:-0.264px">14:00:00</div>
<div class="t" id="c10" style="left:1276.50px;top:465.15px;letter-spacing:-0.008px">20.0</div>
<div class="t" id="d10" style="left:1327.73px;top:465.15px;letter-spacing:-0.214px">06:00:00</div>
<div class="t" id="m11" style="left:477.36px;top:498.15px;letter-spacing:-0.025px">December</div>
<div class="t" id="a11" style="left:826.52px;top:498.15px;letter-spacing:-0.003px">30.0</div>
<div class="t" id="b11" style="left:878.37px;top:498.15px;letter-spacing:-0.264px">14:00:00</div>
<div class="t" id="c11" style="left:1276.50px;top:498.15px;letter-spacing:-0.008px">20.0</div>
<div class="t" id="d11" style="left:1327.73px;top:498.15px;letter-spacing:-0.214px">06:00:00</div>
</body></html>
